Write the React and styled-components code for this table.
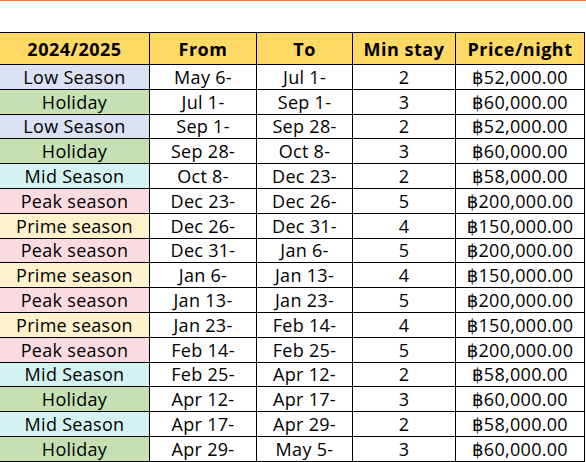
import React from "react";
import styled, { createGlobalStyle } from "styled-components";

const GlobalStyle = createGlobalStyle`
  html, body {
    margin: 0;
    padding: 0;
    background: #ffffff;
    overflow: hidden;
  }
  body {
    font-family: "Open Sans", "Noto Sans CJK KR", "DejaVu Sans", sans-serif;
  }
`;

const Page = styled.div`
  width: 586px;
  height: 462px;
  overflow: hidden;
  background: #fff;
`;

const TopRule = styled.div`
  height: 1px;
  background: #ed7d31;
`;

const Table = styled.table`
  margin-top: 31px;
  margin-left: -1px;
  width: 585px;
  table-layout: fixed;
  border-collapse: collapse;
  color: #000;
  font-size: 18px;
  letter-spacing: 0.3px;
`;

const HeadRow = styled.tr`
  height: 32px;
  background: #ffd966;
`;

const Th = styled.th`
  border: 1px solid #000;
  padding: 0;
  text-align: center;
  font-weight: 700;
  letter-spacing: 0.5px;
  white-space: nowrap;
`;

const Tr = styled.tr`
  height: 24.8px;
`;

const Td = styled.td`
  border: 1px solid #000;
  padding: 0;
  text-align: center;
  white-space: nowrap;
  line-height: 1;
  background: ${(p) => p.$fill || "#fff"};
`;

const fills = {
  "Low Season": "#d9e1f2",
  Holiday: "#c6e0b4",
  "Mid Season": "#d4f2f2",
  "Peak season": "#fadbe0",
  "Prime season": "#fff2cc",
};

const rows = [
  ["Low Season", "May 6-", "Jul 1-", 2, "฿52,000.00"],
  ["Holiday", "Jul 1-", "Sep 1-", 3, "฿60,000.00"],
  ["Low Season", "Sep 1-", "Sep 28-", 2, "฿52,000.00"],
  ["Holiday", "Sep 28-", "Oct 8-", 3, "฿60,000.00"],
  ["Mid Season", "Oct 8-", "Dec 23-", 2, "฿58,000.00"],
  ["Peak season", "Dec 23-", "Dec 26-", 5, "฿200,000.00"],
  ["Prime season", "Dec 26-", "Dec 31-", 4, "฿150,000.00"],
  ["Peak season", "Dec 31-", "Jan 6-", 5, "฿200,000.00"],
  ["Prime season", "Jan 6-", "Jan 13-", 4, "฿150,000.00"],
  ["Peak season", "Jan 13-", "Jan 23-", 5, "฿200,000.00"],
  ["Prime season", "Jan 23-", "Feb 14-", 4, "฿150,000.00"],
  ["Peak season", "Feb 14-", "Feb 25-", 5, "฿200,000.00"],
  ["Mid Season", "Feb 25-", "Apr 12-", 2, "฿58,000.00"],
  ["Holiday", "Apr 12-", "Apr 17-", 3, "฿60,000.00"],
  ["Mid Season", "Apr 17-", "Apr 29-", 2, "฿58,000.00"],
  ["Holiday", "Apr 29-", "May 5-", 3, "฿60,000.00"],
];

function App() {
  return (
    <Page>
      <GlobalStyle />
      <TopRule />
      <Table>
        <colgroup>
          <col style={{ width: 150 }} />
          <col style={{ width: 107 }} />
          <col style={{ width: 96 }} />
          <col style={{ width: 103 }} />
          <col style={{ width: 129 }} />
        </colgroup>
        <thead>
          <HeadRow>
            <Th>2024/2025</Th>
            <Th>From</Th>
            <Th>To</Th>
            <Th>Min stay</Th>
            <Th>Price/night</Th>
          </HeadRow>
        </thead>
        <tbody>
          {rows.map((r, i) => (
            <Tr key={i}>
              <Td $fill={fills[r[0]]}>{r[0]}</Td>
              <Td>{r[1]}</Td>
              <Td>{r[2]}</Td>
              <Td>{r[3]}</Td>
              <Td>{r[4]}</Td>
            </Tr>
          ))}
        </tbody>
      </Table>
    </Page>
  );
}

export default App;
